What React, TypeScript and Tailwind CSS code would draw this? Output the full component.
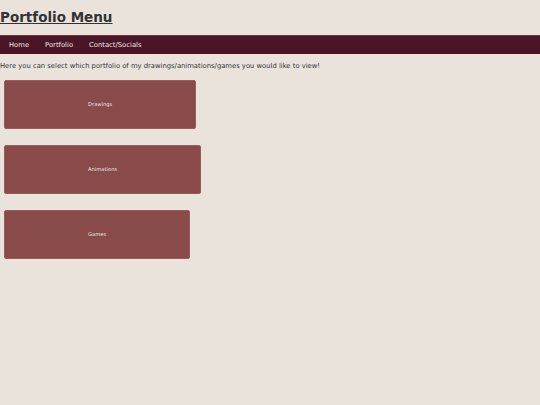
export default function App() {
  const items = ["Drawings", "Animations", "Games"];
  return (
    <div className="min-h-screen w-full bg-[#eae3dc] text-[#333333] font-['DejaVu_Sans',sans-serif]">
      <h1 className="pt-[9px] pb-[10px] text-[13.5px] leading-[16px] font-bold underline">
        Portfolio Menu
      </h1>
      <nav className="flex h-[19px] items-center gap-[16px] border-t border-[#6a3340] bg-[#4a1524] px-[9px] text-[6.8px] text-[#eee6e6]">
        <span>Home</span>
        <span>Portfolio</span>
        <span>Contact/Socials</span>
      </nav>
      <p className="mt-[8px] text-[6.8px] leading-[9px]">
        Here you can select which portfolio of my drawings/animations/games you would like to view!
      </p>
      <div className="mt-[9px] flex flex-col items-start gap-[16px] pl-[4px]">
        {items.map((item) => (
          <button
            key={item}
            className="flex h-[49px] items-center justify-center rounded-[2px] border border-[#9a5c5c] bg-[#894a4a] px-[83px] text-[5.2px] text-[#f0e2e2]"
          >
            {item}
          </button>
        ))}
      </div>
    </div>
  );
}
